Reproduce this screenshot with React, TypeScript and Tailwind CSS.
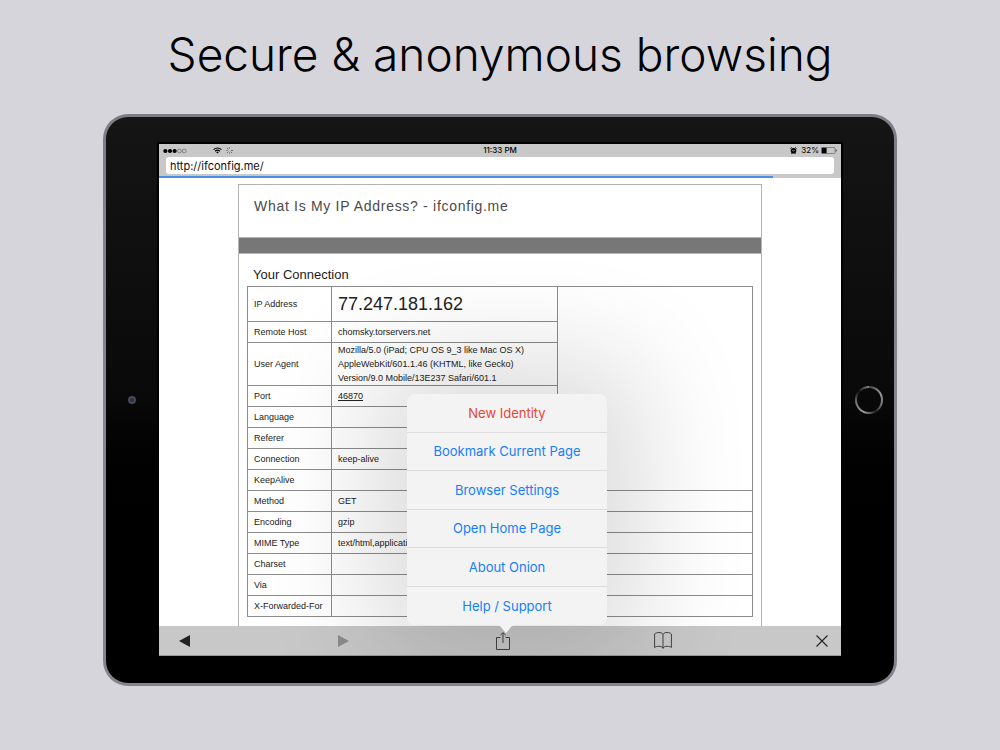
import { useState } from 'react';
import type { ReactNode } from 'react';

type Row = { label: string; value?: ReactNode };

const topRows: Row[] = [
  { label: 'Port', value: <span className="underline">46870</span> },
  { label: 'Language' },
  { label: 'Referer' },
  { label: 'Connection', value: 'keep-alive' },
  { label: 'KeepAlive' },
];

const wideRows: Row[] = [
  { label: 'Method', value: 'GET' },
  { label: 'Encoding', value: 'gzip' },
  { label: 'MIME Type', value: 'text/html,application/xhtml+xml' },
  { label: 'Charset' },
  { label: 'Via' },
  { label: 'X-Forwarded-For' },
];

const actions = ['New Identity', 'Bookmark Current Page', 'Browser Settings', 'Open Home Page', 'About Onion', 'Help / Support'];

const cell = 'border border-[#8c8c8c] px-[6px] py-0 text-left font-normal';

function StatusBar() {
  return (
    <div className="grid grid-cols-3 items-center h-[13px] px-1 text-[8px] leading-[13px] text-black">
      <div className="flex items-center">
        <svg width="24" height="6" viewBox="0 0 24 6">
          <g fill="#000">
            <circle cx="2.4" cy="3" r="2.1" /><circle cx="7" cy="3" r="2.1" /><circle cx="11.6" cy="3" r="2.1" />
          </g>
          <g fill="none" stroke="#555" strokeWidth="0.6">
            <circle cx="16.4" cy="3" r="1.9" /><circle cx="21.2" cy="3" r="1.9" />
          </g>
        </svg>
        <svg className="ml-[26px]" width="9" height="7" viewBox="0 0 9 7" fill="none" stroke="#000" strokeWidth="1.2">
          <path d="M0.6 2.6a5.6 5.6 0 0 1 7.8 0" />
          <path d="M2.1 4.2a3.5 3.5 0 0 1 4.8 0" />
          <path d="M3.2 5.2a1.9 1.9 0 0 1 2.6 0L4.5 6.6z" fill="#000" stroke="none" />
        </svg>
        <svg className="ml-1" width="7" height="7" viewBox="0 0 7 7" stroke="#777" strokeWidth="0.7">
          <path d="M3.5 0v2M3.5 5v2M0 3.5h2" />
          <path d="M5 3.5h2M1 1l1.4 1.4M4.6 4.6L6 6M1 6l1.4-1.4" stroke="#444" />
        </svg>
      </div>
      <div className="text-center font-medium">11:33 PM</div>
      <div className="flex items-center justify-end">
        <svg width="7" height="7" viewBox="0 0 7 7">
          <circle cx="3.5" cy="3.8" r="2.8" />
          <path d="M0.4 1.6L1.8 0.4M6.6 1.6L5.2 0.4M1.4 6.8l.8-.8M5.6 6.8l-.8-.8" stroke="#000" strokeWidth="0.9" />
          <path d="M2.2 3.2l1.3 1 1-1.2" stroke="#c8c8c8" strokeWidth="0.7" fill="none" />
        </svg>
        <span className="ml-1">32%</span>
        <svg className="ml-[2px]" width="16" height="7" viewBox="0 0 16 7">
          <rect x="0.5" y="0.5" width="13.6" height="6" rx="0.8" fill="none" stroke="#555" strokeWidth="0.6" />
          <rect x="0.8" y="0.8" width="4.8" height="5.4" />
          <path d="M14.8 2.3a1.3 1.3 0 0 1 0 2.4z" />
        </svg>
      </div>
    </div>
  );
}

function ConnectionPage() {
  return (
    <div className="bg-white pt-[6px]">
      <div className="mx-[79px] border border-b-0 border-[#b4b4b4] font-['Liberation_Sans',Arial,sans-serif] text-[#222]">
        <h2 className="h-[52px] pl-[15px] pt-[11px] text-sm leading-5 tracking-wider text-[#4a4a4a]">What Is My IP Address? - ifconfig.me</h2>
        <div className="h-[17px] bg-[#777] border-y border-[#b4b4b4]" />
        <div className="px-2 pb-[9px]">
          <h3 className="pl-[6px] pt-[13px] pb-[3px] text-[13px] leading-4">Your Connection</h3>
          <table className="w-full border-collapse text-[9px] leading-[14px]">
            <colgroup>
              <col className="w-[84px]" />
              <col className="w-[226px]" />
              <col />
            </colgroup>
            <tbody>
              <tr className="h-[35px]">
                <th scope="row" className={cell}>IP Address</th>
                <td className={`${cell} text-lg leading-5`}>77.247.181.162</td>
                <td rowSpan={8} className={cell} />
              </tr>
              <tr className="h-[21px]">
                <th scope="row" className={cell}>Remote Host</th>
                <td className={cell}>chomsky.torservers.net</td>
              </tr>
              <tr>
                <th scope="row" className={cell}>User Agent</th>
                <td className={cell}>
                  Mozilla/5.0 (iPad; CPU OS 9_3 like Mac OS X)<br />
                  AppleWebKit/601.1.46 (KHTML, like Gecko)<br />
                  Version/9.0 Mobile/13E237 Safari/601.1
                </td>
              </tr>
              {topRows.map(r => (
                <tr key={r.label} className="h-[21px]">
                  <th scope="row" className={cell}>{r.label}</th>
                  <td className={cell}>{r.value}</td>
                </tr>
              ))}
              {wideRows.map(r => (
                <tr key={r.label} className="h-[21px]">
                  <th scope="row" className={`${cell} whitespace-nowrap`}>{r.label}</th>
                  <td colSpan={2} className={cell}>{r.value}</td>
                </tr>
              ))}
            </tbody>
          </table>
        </div>
      </div>
    </div>
  );
}

function ActionMenu() {
  return (
    <div className="absolute bottom-[31px] left-1/2 ml-[7px] -translate-x-1/2 w-[200px] rounded-lg bg-[#f3f3f3] shadow-[0_0_110px_36px_rgba(0,0,0,0.14)]">
      <div className="grid grid-rows-6 h-[231px] divide-y divide-[#dcdcdc]">
        {actions.map((label, i) => (
          <button key={label} type="button" className={`text-[13px] leading-5 ${i === 0 ? 'text-[#ea4335]' : 'text-[#157efb]'}`}>
            {label}
          </button>
        ))}
      </div>
      <svg className="absolute top-full left-[90px]" width="18" height="8" viewBox="0 0 18 8">
        <path d="M0 0h18c-2 0-3 1-4 2L9.600 7.500q-.6.700-1.200 0L4 2C3 1 2 0 0 0z" fill="#f3f3f3" />
      </svg>
    </div>
  );
}

function Toolbar() {
  const btn = 'w-6 h-6 grid place-items-center';
  return (
    <div className="flex items-center justify-between h-[30px] pl-[13px] pr-[7px] bg-[#c8c8c8] border-b border-[#999]">
      <button type="button" aria-label="Back" className={btn}>
        <svg width="11" height="12" viewBox="0 0 11 12"><path d="M0 6L11 0v12z" fill="#222" /></svg>
      </button>
      <button type="button" aria-label="Forward" className={btn}>
        <svg width="11" height="12" viewBox="0 0 11 12"><path d="M11 6L0 0v12z" fill="#8c8c8c" /></svg>
      </button>
      <button type="button" aria-label="Share" className={btn}>
        <svg width="14" height="18" viewBox="0 0 14 18" fill="none" stroke="#444" strokeWidth="1">
          <path d="M4.500 5.500h-4v12h13v-12h-4M7 11V0.800M4.500 3L7 .7 9.500 3" />
        </svg>
      </button>
      <button type="button" aria-label="Bookmarks" className={btn}>
        <svg width="18" height="17" viewBox="0 0 18 17" fill="none" stroke="#333" strokeWidth="0.9">
          <path d="M9 2.400C8.300.9 6.500.5 4.900.5 3.200.5 1.500 1 .6 2v13.500c1.200-1 2.800-1.200 4.300-1.200 1.700 0 3.400.4 4.100 1.900.7-1.500 2.400-1.900 4.100-1.900 1.500 0 3.100.2 4.300 1.200V2C16.500 1 14.800.5 13.100.5 11.500.5 9.700.9 9 2.400zM9 2.400V16.500" />
        </svg>
      </button>
      <button type="button" aria-label="Stop" className={btn}>
        <svg width="12" height="12" viewBox="0 0 12 12" stroke="#222" strokeWidth="1.100"><path d="M.5.500l11 11M11.500.500l-11 11" /></svg>
      </button>
    </div>
  );
}

export default function App() {
  const [url, setUrl] = useState('http://ifconfig.me/');
  const loaded = 90;

  return (
    <main className="min-h-screen bg-[#d6d5dc] px-6 pt-[26px] pb-16 font-['Inter',sans-serif]">
      <h1 className="text-center text-[46px] leading-[56px] font-light text-black">Secure &amp; anonymous browsing</h1>

      <div className="mt-8 mx-auto w-full max-w-[794px] rounded-[25px] p-[3px] bg-linear-to-b from-[#7c7d85] via-[#85858f] to-[#85838c]">
        <div className="flex items-center rounded-[22px] bg-linear-to-b from-[#151515] via-[#090909] to-black to-75% py-[25px]">
          <div className="w-[51px] shrink-0 grid place-items-center">
            <span className="w-2 h-2 rounded-full bg-[#22305c] border-2 border-[#4a4a4a]" />
          </div>

          <div className="relative flex-1 min-w-0 overflow-hidden border-2 border-black">
            <header className="bg-[#c8c8c8]">
              <StatusBar />
              <div className="px-[7px] pb-[2px]">
                <input aria-label="Address" value={url} onChange={e => setUrl(e.target.value)}
                  className="block w-full h-[17px] rounded-[3px] bg-white px-1 text-[11px] text-[#111] outline-none" />
              </div>
              <div className="h-[2px]" role="progressbar" aria-label="Page load" aria-valuenow={loaded}>
                <div className="h-full bg-[#4a8fe7]" style={{ width: `${loaded}%` }} />
              </div>
            </header>
            <ConnectionPage />
            <Toolbar />
            <ActionMenu />
          </div>

          <div className="w-[51px] shrink-0 grid place-items-center">
            <button type="button" aria-label="Home"
              className="w-7 h-7 rounded-full p-[2px] bg-[conic-gradient(#444,#999_60deg,#777_110deg,#222_150deg,#999_200deg,#777_260deg,#111_310deg,#888)]">
              <span className="block w-full h-full rounded-full bg-[#080808]" />
            </button>
          </div>
        </div>
      </div>
    </main>
  );
}
